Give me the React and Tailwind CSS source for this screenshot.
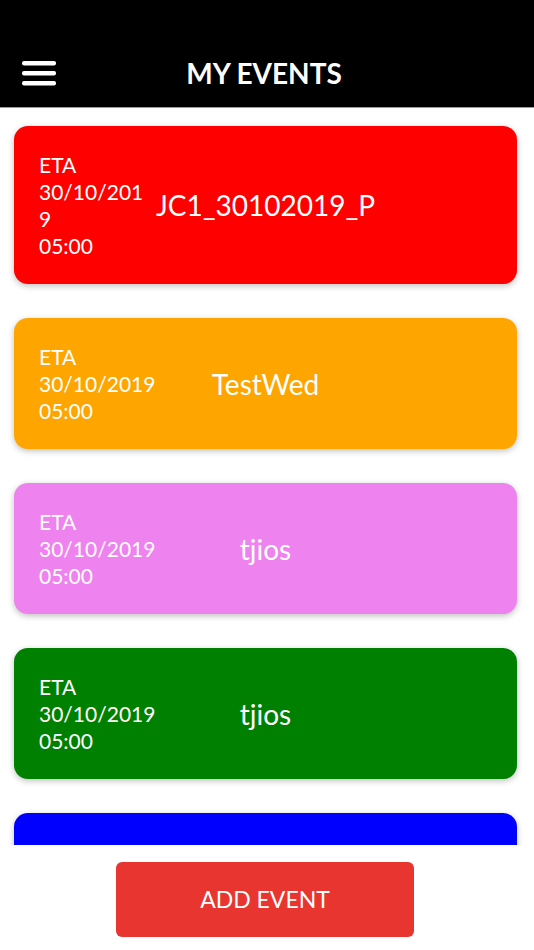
import React from 'react';

const events = [
  { id: 1, name: 'JC1_30102019_P', date: '30/10/2019', time: '05:00', color: 'bg-[#ff0000]' },
  { id: 2, name: 'TestWed', date: '30/10/2019', time: '05:00', color: 'bg-[#ffa500]' },
  { id: 3, name: 'tjios', date: '30/10/2019', time: '05:00', color: 'bg-[#ee82ee]' },
  { id: 4, name: 'tjios', date: '30/10/2019', time: '05:00', color: 'bg-[#008000]' },
  { id: 5, name: 'tjios', date: '30/10/2019', time: '05:00', color: 'bg-[#0000ff]' },
];

const EventCard = ({ ev }) => (
  <div className={`${ev.color} shrink-0 rounded-[14px] shadow-[0_2px_6px_rgba(0,0,0,0.25)] px-[25px] py-[25px] flex items-center text-white`}>
    <div className="flex-1 min-w-0 text-[21px] leading-[27px] break-all">
      <div>ETA</div>
      <div>{ev.date}</div>
      <div>{ev.time}</div>
    </div>
    <div className="shrink-0 px-[10px] text-[28px] leading-[34px]">{ev.name}</div>
    <div className="flex-1 min-w-0" />
  </div>
);

const App = () => {
  return (
    <div className="h-[950px] w-full flex flex-col bg-white font-['Lato','Liberation_Sans',sans-serif] overflow-hidden">
      <header className="h-[108px] shrink-0 bg-black border-b border-[#9a9a9a] pt-[38px] flex items-center">
        <div className="w-[56px] pl-[22px] shrink-0">
          <svg width="34" height="26" viewBox="0 0 34 26">
            <rect x="0" y="1" width="34" height="4.5" rx="2" fill="#fff" />
            <rect x="0" y="11" width="34" height="4.5" rx="2" fill="#fff" />
            <rect x="0" y="21" width="34" height="4.5" rx="2" fill="#fff" />
          </svg>
        </div>
        <h1 className="flex-1 text-center text-white font-bold text-[28px] pr-[6px]">MY EVENTS</h1>
        <div className="w-[56px] shrink-0" />
      </header>

      <main className="h-[737px] shrink-0 overflow-hidden pl-[14px] pr-[17px] pt-[18px] flex flex-col gap-[34px]">
        {events.map(ev => <EventCard key={ev.id} ev={ev} />)}
      </main>

      <footer className="flex-1 flex justify-center pt-[17px] pr-[4px]">
        <button className="w-[298px] h-[75px] rounded-[6px] bg-[#e83530] text-white text-[23px]">
          ADD EVENT
        </button>
      </footer>
    </div>
  );
};

export default App;
